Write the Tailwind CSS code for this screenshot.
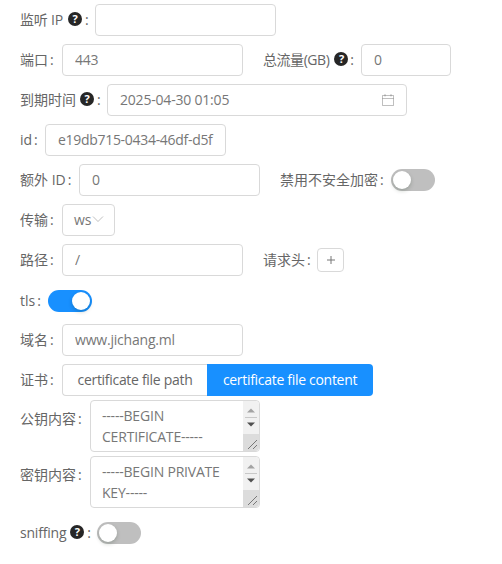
<!DOCTYPE html>
<html lang="en">
<head>
    <meta charset="UTF-8">
    <meta name="viewport" content="width=device-width, initial-scale=1.0">
    <title>Inbound form</title>
    <script src="https://cdn.jsdelivr.net/npm/@tailwindcss/browser@4"></script>
</head>
<body class="bg-white text-[14px] text-[#666] font-['Open_Sans','Noto_Sans_CJK_SC',sans-serif]">
    <form class="pl-5 pt-1 h-[564px] overflow-hidden">
        <div class="flex items-center h-8 mb-2">
            <label class="flex items-center mr-2 w-[67px] tracking-[-0.2px] whitespace-nowrap -mt-0.5">监听 IP<span class="ml-[5px] shrink-0 w-[14px] h-[14px] rounded-full bg-[#262626] text-white text-[11px] font-bold flex items-center justify-center">?</span><span class="ml-[3px]">:</span></label>
            <input type="text" class="w-[181px] h-8 px-3 border border-[#d9d9d9] rounded">
        </div>
        <div class="flex items-center h-8 mb-2">
            <label class="mr-2 w-[34px] whitespace-nowrap -mt-0.5">端口<span class="ml-0.5">:</span></label>
            <input type="text" value="443" class="w-[181px] h-8 px-3 pb-0.5 border border-[#d9d9d9] rounded text-[#777] tracking-[-0.2px]">
            <label class="flex items-center ml-5 mr-2 w-[90px] tracking-[-0.45px] whitespace-nowrap -mt-0.5">总流量(GB)<span class="ml-[5px] shrink-0 w-[14px] h-[14px] rounded-full bg-[#262626] text-white text-[11px] font-bold flex items-center justify-center">?</span><span class="ml-0.5">:</span></label>
            <input type="text" value="0" class="w-[90px] h-8 px-3 pb-0.5 border border-[#d9d9d9] rounded text-[#777]">
        </div>
        <div class="flex items-center h-8 mb-2">
            <label class="flex items-center mr-2 w-[79px] whitespace-nowrap -mt-0.5">到期时间<span class="ml-1 shrink-0 w-[14px] h-[14px] rounded-full bg-[#262626] text-white text-[11px] font-bold flex items-center justify-center">?</span><span class="ml-[3px]">:</span></label>
            <div class="relative">
                <input type="text" value="2025-04-30 01:05" class="w-[300px] h-8 px-3 pb-0.5 border border-[#d9d9d9] rounded text-[#777] tracking-[-0.2px]">
                <svg class="absolute right-[12px] top-[9px] w-[14px] h-[14px] text-black/25" viewBox="0 0 14 14" fill="none" stroke="currentColor" stroke-width="1"><path d="M1.5 2.5h11v10h-11zM1.5 5.5h11M4 1v2.5M10 1v2.5"/></svg>
            </div>
        </div>
        <div class="flex items-center h-8 mb-2">
            <label class="mr-2 w-[17px] whitespace-nowrap -mt-0.5">id<span class="ml-0.5">:</span></label>
            <input type="text" value="e19db715-0434-46df-d5f" class="w-[181px] h-8 pl-3 pr-1 pb-0.5 border border-[#d9d9d9] rounded text-[#777] tracking-[-0.3px]">
        </div>
        <div class="flex items-center h-8 mb-2">
            <label class="mr-2 w-[51px] whitespace-nowrap -mt-0.5">额外 ID<span class="ml-0.5">:</span></label>
            <input type="text" value="0" class="w-[181px] h-8 px-3 pb-0.5 border border-[#d9d9d9] rounded text-[#777]">
            <label class="ml-5 mr-2 w-[103px] whitespace-nowrap -mt-0.5">禁用不安全加密<span class="ml-0.5">:</span></label>
            <span class="w-11 h-[22px] rounded-full bg-[#bfbfbf] p-0.5 flex"><span class="w-[18px] h-[18px] rounded-full bg-white shadow-[0_2px_4px_rgba(0,35,11,0.2)]"></span></span>
        </div>
        <div class="flex items-center h-8 mb-2">
            <label class="mr-2 w-[34px] whitespace-nowrap -mt-0.5">传输<span class="ml-0.5">:</span></label>
            <div class="w-[53px] h-8 pl-[11px] pb-0.5 border border-[#d9d9d9] rounded flex items-center text-[#777]">
                <span>ws</span>
                <svg class="w-[12px] h-[12px] text-black/25" viewBox="0 0 12 12" fill="none" stroke="currentColor" stroke-width="1"><path d="M1 3.5l5 5 5-5"/></svg>
            </div>
        </div>
        <div class="flex items-center h-8 mb-2">
            <label class="mr-2 w-[34px] whitespace-nowrap -mt-0.5">路径<span class="ml-0.5">:</span></label>
            <input type="text" value="/" class="w-[181px] h-8 px-3 pb-0.5 border border-[#d9d9d9] rounded text-[#777]">
            <label class="ml-5 mr-2 w-[46px] whitespace-nowrap -mt-0.5">请求头<span class="ml-0.5">:</span></label>
            <button type="button" class="w-[27px] h-6 border border-[#d9d9d9] rounded flex items-center justify-center">
                <svg class="w-2 h-2 text-[#777]" viewBox="0 0 8 8" fill="none" stroke="currentColor" stroke-width="1"><path d="M4 0v8M0 4h8"/></svg>
            </button>
        </div>
        <div class="flex items-center h-[22px] mt-[14px] mb-3">
            <label class="mr-2 w-5 whitespace-nowrap -mt-0.5">tls<span class="ml-0.5">:</span></label>
            <span class="w-11 h-[22px] rounded-full bg-[#1890ff] p-0.5 flex justify-end"><span class="w-[18px] h-[18px] rounded-full bg-white shadow-[0_2px_4px_rgba(0,35,11,0.2)]"></span></span>
        </div>
        <div class="flex items-center h-8 mb-2">
            <label class="mr-2 w-[34px] whitespace-nowrap -mt-0.5">域名<span class="ml-0.5">:</span></label>
            <input type="text" value="www.jichang.ml" class="w-[181px] h-8 px-3 pb-0.5 border border-[#d9d9d9] rounded text-[#777] tracking-[-0.2px]">
        </div>
        <div class="flex items-center h-8 mb-1">
            <label class="mr-2 w-[34px] whitespace-nowrap -mt-0.5">证书<span class="ml-0.5">:</span></label>
            <div class="flex h-8 tracking-[-0.3px]">
                <span class="w-[145px] pb-0.5 border border-[#d9d9d9] border-r-0 rounded-l flex items-center justify-center">certificate file path</span>
                <span class="w-[166px] pb-0.5 bg-[#1890ff] text-white rounded-r flex items-center justify-center">certificate file content</span>
            </div>
        </div>
        <div class="flex items-start mb-1">
            <label class="mr-2 w-[62px] mt-2 whitespace-nowrap">公钥内容<span class="ml-0.5">:</span></label>
            <div class="relative w-[170px] h-[52px]">
                <textarea rows="2" readonly class="block w-full h-full pl-[11px] pr-[20px] py-1 leading-[21px] border border-[#d9d9d9] rounded overflow-hidden resize-none text-[#777] tracking-[-0.2px]">-----BEGIN CERTIFICATE-----</textarea>
                <div class="absolute right-px top-px bottom-px w-4 bg-[#f1f1f1] rounded-r flex flex-col">
                    <svg class="w-4 h-[33px] shrink-0" viewBox="0 0 16 33"><path d="M4 11.5h8l-4-4z" fill="#a3a3a3"/><path d="M2 16.5h12" stroke="#c8c8c8"/><path d="M4 21.5h8l-4 4z" fill="#505050"/></svg>
                    <svg class="w-4 flex-1 bg-[#dcdcdc] rounded-br" viewBox="0 0 16 17" fill="none" stroke="#777"><path d="M5 15l9-9M10 15l4-4"/></svg>
                </div>
            </div>
        </div>
        <div class="flex items-start mb-[14px]">
            <label class="mr-2 w-[62px] mt-2 whitespace-nowrap">密钥内容<span class="ml-0.5">:</span></label>
            <div class="relative w-[170px] h-[52px]">
                <textarea rows="2" readonly class="block w-full h-full pl-[11px] pr-[20px] py-1 leading-[21px] border border-[#d9d9d9] rounded overflow-hidden resize-none text-[#777] tracking-[-0.2px]">-----BEGIN PRIVATE KEY-----</textarea>
                <div class="absolute right-px top-px bottom-px w-4 bg-[#f1f1f1] rounded-r flex flex-col">
                    <svg class="w-4 h-[33px] shrink-0" viewBox="0 0 16 33"><path d="M4 11.5h8l-4-4z" fill="#a3a3a3"/><path d="M2 16.5h12" stroke="#c8c8c8"/><path d="M4 21.5h8l-4 4z" fill="#505050"/></svg>
                    <svg class="w-4 flex-1 bg-[#dcdcdc] rounded-br" viewBox="0 0 16 17" fill="none" stroke="#777"><path d="M5 15l9-9M10 15l4-4"/></svg>
                </div>
            </div>
        </div>
        <div class="flex items-center h-[22px]">
            <label class="flex items-center mr-2 w-[69px] tracking-[-0.2px] whitespace-nowrap -mt-0.5">sniffing<span class="ml-1 shrink-0 w-[14px] h-[14px] rounded-full bg-[#262626] text-white text-[11px] font-bold flex items-center justify-center">?</span><span class="ml-[3px]">:</span></label>
            <span class="w-11 h-[22px] rounded-full bg-[#bfbfbf] p-0.5 flex"><span class="w-[18px] h-[18px] rounded-full bg-white shadow-[0_2px_4px_rgba(0,35,11,0.2)]"></span></span>
        </div>
    </form>
</body>
</html>
